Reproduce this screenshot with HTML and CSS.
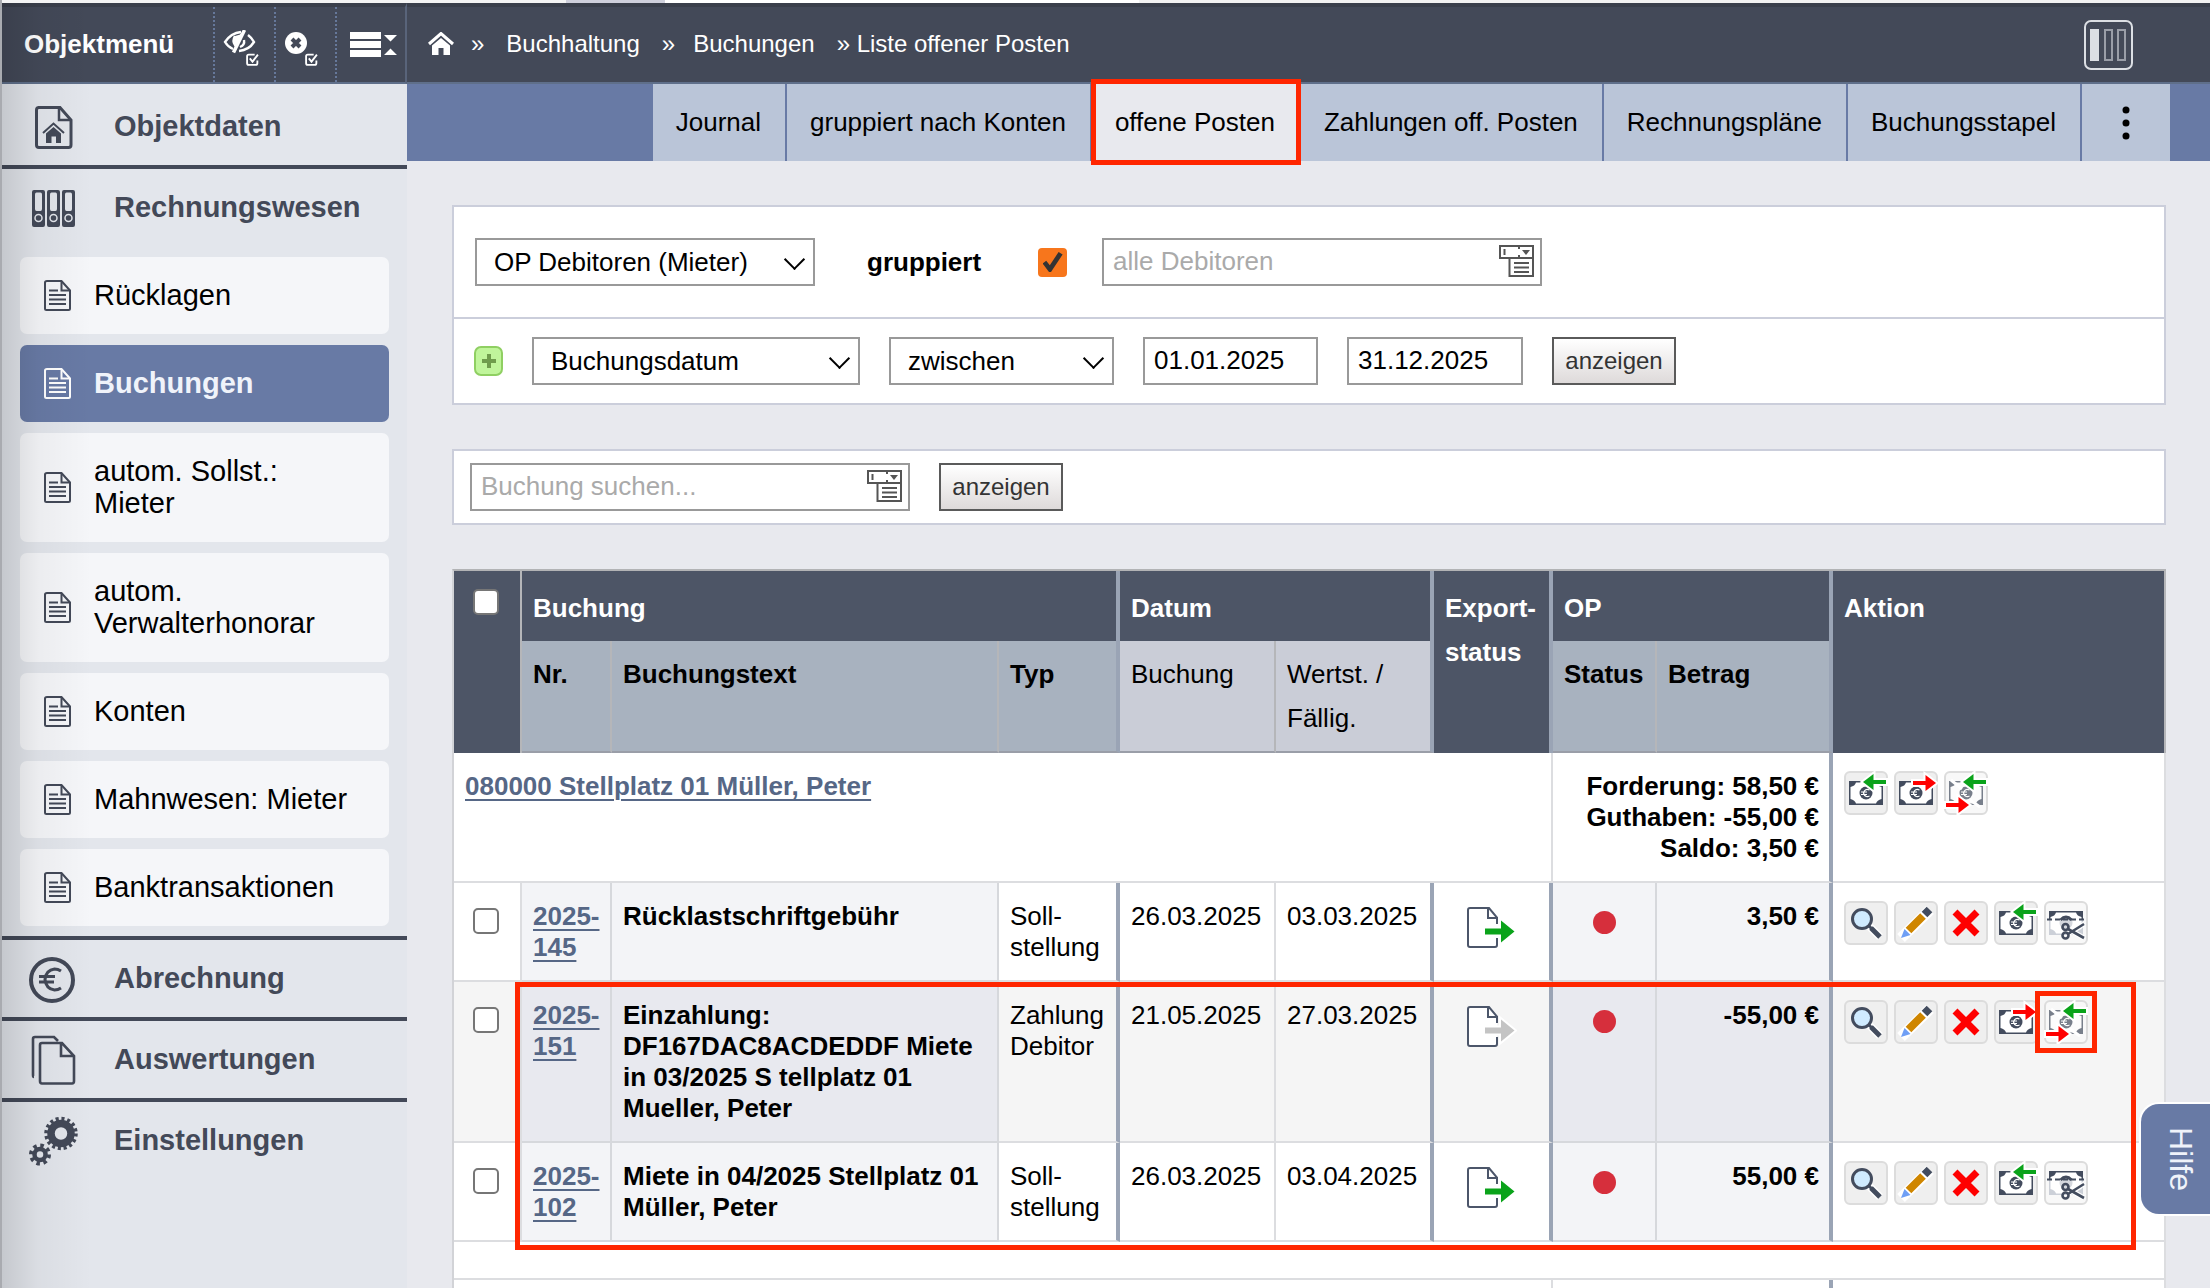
FILE: index.html
```html
<!DOCTYPE html>
<html lang="de">
<head>
<meta charset="utf-8">
<title>Liste offener Posten</title>
<link rel="stylesheet" href="styles.css">
</head>
<body>
<svg class="defs" width="0" height="0" aria-hidden="true">
  <symbol id="doc" viewBox="0 0 27 31"><g fill="none" stroke="currentColor" stroke-width="2"><path d="M3 1H17.500L26 10.500V28.500Q26 30 24.500 30H2.500Q1 30 1 28.500V2.500Q1 1 3 1z"/><path d="M17.500 1V10.500H26M5 10.500H14M5 15H22M5 19.500H22M5 24H22"/></g></symbol>
  <symbol id="check" viewBox="0 0 12 12"><path d="M8 1.500H2.500Q1 1.500 1 3V9.500Q1 11 2.500 11H9Q10.500 11 10.500 9.500V7M3.500 5L6 8L11 1.500" fill="none" stroke="#fff" stroke-width="1.700"/></symbol>
  <symbol id="lookup" viewBox="0 0 35 32"><g fill="none" stroke="#555" stroke-width="2"><path d="M1 1H34V13H1zM10.500 13H34V31H10.500zM5.500 4V10M20 1V4M20 10V13M15 18H30M15 22.500H30M15 27H30"/></g><path d="M23 5H31L27 10z" fill="#555"/></symbol>
  <symbol id="note" viewBox="0 0 44 44"><path d="M5 10H39V34H5z" fill="#434c5e"/><path d="M12 11.500H32Q33 15 37.500 16V28Q33 29 32 32.500H12Q11 29 6.500 28V16Q11 15 12 11.500z" fill="#fff"/><circle cx="22" cy="22" r="6.500" fill="#434c5e"/><path d="M25.500 19Q21 17 19.500 22Q21 27 25.500 25M17 21H23M17 23.500H23" fill="none" stroke="#fff" stroke-width="1.200"/></symbol>
  <symbol id="left" viewBox="0 0 44 44"><path d="M19 11L29.500 3V9H42V13H29.500V19z" fill="#0aa31a" stroke="#fff" stroke-width="4" paint-order="stroke"/></symbol>
  <symbol id="in" viewBox="0 0 44 44"><use href="#note"/><use href="#left"/></symbol>
  <symbol id="out" viewBox="0 0 48 44"><use href="#note" width="44" height="44"/><path d="M42 12L31.500 4V10H19V14H31.500V20z" fill="#f00" stroke="#fff" stroke-width="4" paint-order="stroke"/></symbol>
  <symbol id="both" viewBox="0 0 44 44"><use href="#note" opacity=".7"/><path d="M7 9L18 18M26 29L36 36" stroke="#fff" stroke-width="3"/><use href="#left"/><path d="M25 34L14.500 26V32H2V36H14.500V42z" fill="#f00" stroke="#fff" stroke-width="4" paint-order="stroke"/></symbol>
  <symbol id="zoomin" viewBox="0 0 44 44"><path d="M25 25L36 36" stroke="#fff" stroke-width="8"/><path d="M27 27L36 36" stroke="#434c5e" stroke-width="5"/><path d="M24 24L28 28" stroke="#434c5e" stroke-width="3"/><circle cx="18" cy="18" r="9.500" fill="#d0ebff" stroke="#434c5e" stroke-width="3"/></symbol>
  <symbol id="edit" viewBox="0 0 44 44"><path d="M7 37L36 9" stroke="#fff" stroke-width="11"/><path d="M14.500 29.500L29 15" stroke="#cf8600" stroke-width="8"/><path d="M30.500 13.500L35.500 8.500" stroke="#434c5e" stroke-width="8"/><path d="M7 37L10.500 28L16.500 34z" fill="#6f9ff5"/></symbol>
  <symbol id="del" viewBox="0 0 44 44"><path d="M11 11L33 33M33 11L11 33" stroke="#f00" stroke-width="7"/></symbol>
  <symbol id="cut" viewBox="0 0 44 44"><path d="M5 19V34H39V19z" fill="#ccd0d8"/><path d="M5 10H39V19H5z" fill="#434c5e"/><path d="M12 11.500H32Q33 15 37.500 16V28Q33 29 32 32.500H12Q11 29 6.500 28V16Q11 15 12 11.500z" fill="#fff"/><circle cx="22" cy="22" r="6.500" fill="#d5d8de"/><path d="M16.500 19Q22 13 27.500 19" fill="none" stroke="#434c5e" stroke-width="3"/><path d="M3 18.500H41" stroke="#434c5e" stroke-width="2" stroke-dasharray="5 3"/><g fill="none" stroke="#fff" stroke-width="5"><path d="M24 33L40 23M24 28L40 37"/></g><g fill="none" stroke="#434c5e" stroke-width="2.600"><circle cx="21.500" cy="26" r="3"/><circle cx="21.500" cy="34.500" r="3"/><path d="M24 33L40 23M24 28L40 37"/></g></symbol>
  <symbol id="export" viewBox="0 0 50 41"><path d="M28 1H3Q1 1 1 3V38Q1 40 3 40H28Q30 40 30 38V10L22 1z" fill="#fff" stroke="none"/><path d="M30 17V10.500L22 1H3Q1 1 1 3V38Q1 40 3 40H28Q30 40 30 38V31M21 1V11H30" fill="none" stroke="#4c566a" stroke-width="2"/><path d="M18 21.500H34V13.500L47.500 24.500L34 35.500V27.500H18z" fill="currentColor" stroke="#fff" stroke-width="4" paint-order="stroke"/></symbol>
</svg>
<div class="strip"></div>
<div class="app">
  <aside class="sidebar">
    <div class="side-head">
      <h1 class="side-title">Objektmenü</h1>
      <button class="head-btn" aria-label="Ausblenden"><svg width="36" height="36" viewBox="0 0 36 36"><g fill="none" stroke="#fff" stroke-width="2.400"><path d="M18 2Q8 3 2 12Q5 17 10 19"/><path d="M25 5Q29 8 31 12Q26 20 16 21"/><path d="M21 10Q22 15 17 17"/><path d="M12 6Q9 11 12 15L19 4" fill="#fff"/><path d="M21.500 0L10.500 22.500" stroke-width="3.500"/></g><use href="#check" x="23" y="23" width="13" height="13"/></svg></button>
      <button class="head-btn" aria-label="Schließen"><svg width="34" height="36" viewBox="0 0 34 36"><circle cx="12" cy="13" r="11" fill="#fff"/><path d="M8 9L16 17M16 9L8 17" stroke="#434958" stroke-width="4"/><use href="#check" x="21" y="23" width="13" height="13"/></svg></button>
      <button class="head-btn head-btn-wide" aria-label="Menü zusammenklappen"><svg width="48" height="26" viewBox="0 0 48 26"><path d="M0 0H31V7H0zM0 9H31V16H0zM0 18H31V25H0zM34 3H47L40.500 9.500zM34 23H47L40.500 16.500z" fill="#fff"/></svg></button>
    </div>
    <nav class="side-nav" aria-label="Objektmenü">
      <section class="group group-first"><a class="group-link" href="#"><svg width="50" height="50" viewBox="0 0 50 50"><g fill="none" stroke="currentColor"><path d="M10 5.500H32L43 18V43Q43 45.500 40.500 45.500H11Q8.500 45.500 8.500 43V8Q8.500 5.500 11 5.500z" stroke-width="3"/><path d="M31 5.500V18H43" stroke-width="2.500"/><path d="M15 31L25.500 21.500L36 31" stroke-width="2"/></g><path d="M18 31.500L25.500 25L33 31.500V41H28V34.500H23.500V41H18z" fill="currentColor"/></svg>Objektdaten</a></section>
      <section class="group"><a class="group-link" href="#"><svg width="50" height="50" viewBox="0 0 50 50"><path fill-rule="evenodd" fill="currentColor" d="M6 7h9q2 0 2 2v33q0 2-2 2H6q-2 0-2-2V9q0-2 2-2zM8.500 9.500q-1.500 0-1.500 2V26q0 2 1.500 2h4q1.500 0 1.500-2V11.500q0-2-1.500-2zM21 7h9q2 0 2 2v33q0 2-2 2H21q-2 0-2-2V9q0-2 2-2zM23.500 9.500q-1.500 0-1.500 2V26q0 2 1.500 2h4q1.500 0 1.500-2V11.500q0-2-1.500-2zM36 7h9q2 0 2 2v33q0 2-2 2H36q-2 0-2-2V9q0-2 2-2zM38.500 9.500q-1.500 0-1.500 2V26q0 2 1.500 2h4q1.500 0 1.500-2V11.500q0-2-1.500-2z"/><g fill="none" stroke="#e3e6ec" stroke-width="1.500"><circle cx="10.500" cy="35" r="3.500"/><circle cx="25.500" cy="35" r="3.500"/><circle cx="40.500" cy="35" r="3.500"/></g></svg>Rechnungswesen</a>
        <ul class="subnav">
          <li><a class="sub" href="#"><svg width="27" height="31"><use href="#doc"/></svg><span>Rücklagen</span></a></li>
          <li><a class="sub sub-active" href="#" aria-current="page"><svg width="27" height="31"><use href="#doc"/></svg><span>Buchungen</span></a></li>
          <li><a class="sub" href="#"><svg width="27" height="31"><use href="#doc"/></svg><span>autom. Sollst.:<br>Mieter</span></a></li>
          <li><a class="sub" href="#"><svg width="27" height="31"><use href="#doc"/></svg><span>autom.<br>Verwalterhonorar</span></a></li>
          <li><a class="sub" href="#"><svg width="27" height="31"><use href="#doc"/></svg><span>Konten</span></a></li>
          <li><a class="sub" href="#"><svg width="27" height="31"><use href="#doc"/></svg><span>Mahnwesen: Mieter</span></a></li>
          <li><a class="sub" href="#"><svg width="27" height="31"><use href="#doc"/></svg><span>Banktransaktionen</span></a></li>
        </ul>
      </section>
      <section class="group"><a class="group-link" href="#"><svg width="50" height="50" viewBox="0 0 50 50"><g fill="none" stroke="currentColor"><circle cx="24" cy="26" r="21" stroke-width="4"/><path d="M33 17Q30 15 26.500 15Q18 16 17 25.500Q18 35 26.500 36Q30 36 33 34M11 22.500H27M11 28H26" stroke-width="3"/></g></svg>Abrechnung</a></section>
      <section class="group"><a class="group-link" href="#"><svg width="50" height="50" viewBox="0 0 50 50"><g fill="none" stroke="currentColor" stroke-width="2.600"><path d="M6 42Q5 42 5 40V4Q5 2 7 2H26L30 6"/><path d="M14 8H34L46 21V46Q46 48.500 44 48.500H14Q12 48.500 12 46V10Q12 8 14 8zM33 8V21H46"/></g></svg>Auswertungen</a></section>
      <section class="group"><a class="group-link" href="#"><svg width="50" height="50" viewBox="0 0 50 50"><g fill="none" stroke="currentColor"><circle cx="33" cy="17.500" r="10" stroke-width="7.500"/><circle cx="33" cy="17.500" r="14.500" stroke-width="4.500" stroke-dasharray="3 2.694"/><circle cx="12" cy="38.500" r="5.500" stroke-width="4.500"/><circle cx="12" cy="38.500" r="9" stroke-width="4" stroke-dasharray="3.500 3.569"/></g></svg>Einstellungen</a></section>
    </nav>
  </aside>

  <div class="page">
    <header class="topbar">
      <nav class="crumbs" aria-label="Pfad">
        <a href="#" aria-label="Start"><svg width="26" height="24" viewBox="0 0 26 24"><path d="M1 12L13 1.500L25 12" fill="none" stroke="#fff" stroke-width="3"/><path d="M4 13.500L13 6L22 13.500V23H15.500V16H10.500V23H4z" fill="#fff"/></svg></a>
        <span class="sep sep-home">»</span><a href="#">Buchhaltung</a><span class="sep">»</span><a href="#">Buchungen</a><span class="current">» Liste offener Posten</span>
      </nav>
      <button class="cols-btn" aria-label="Spaltenansicht"><svg width="49" height="50" viewBox="0 0 49 50"><rect x="1" y="1" width="47" height="48" rx="6" fill="none" stroke="#dcdfe4" stroke-width="2"/><rect x="6" y="9" width="9" height="32" fill="#dcdfe4"/><path d="M21 10H28V40H21zM34 10H41V40H34z" fill="none" stroke="#9a9ea8" stroke-width="2"/></svg></button>
    </header>
    <nav class="tabs" aria-label="Ansichten">
      <a class="tab" href="#">Journal</a><a class="tab" href="#">gruppiert nach Konten</a><a class="tab tab-active" href="#" aria-current="page">offene Posten</a><a class="tab" href="#">Zahlungen off. Posten</a><a class="tab" href="#">Rechnungspläne</a><a class="tab" href="#">Buchungsstapel</a><button class="tab tab-more" aria-label="Weitere"><svg width="8" height="34" viewBox="0 0 8 34"><circle cx="4" cy="4" r="3.500"/><circle cx="4" cy="17" r="3.500"/><circle cx="4" cy="30" r="3.500"/></svg></button>
    </nav>

    <main class="content">
      <form class="panel">
        <div class="row row-tall">
          <span class="select select-type"><select aria-label="Postenart"><option>OP Debitoren (Mieter)</option></select></span>
          <label class="group-label" for="grouped">gruppiert</label>
          <input class="tick-orange" type="checkbox" id="grouped" checked>
          <span class="lookup"><input type="text" placeholder="alle Debitoren" aria-label="Debitoren"><svg width="35" height="32"><use href="#lookup"/></svg></span>
        </div>
        <div class="row">
          <button class="add" type="button" aria-label="Filter hinzufügen"><svg width="14" height="14" viewBox="0 0 14 14"><path d="M5 0H9V5H14V9H9V14H5V9H0V5H5z" fill="#6f9c4c"/></svg></button>
          <span class="select select-field"><select aria-label="Feld"><option>Buchungsdatum</option></select></span>
          <span class="select select-op"><select aria-label="Vergleich"><option>zwischen</option></select></span>
          <input class="date" type="text" value="01.01.2025" aria-label="von">
          <input class="date" type="text" value="31.12.2025" aria-label="bis">
          <button class="show" type="button">anzeigen</button>
        </div>
      </form>

      <form class="panel">
        <div class="row row-search">
          <span class="lookup"><input type="text" placeholder="Buchung suchen..." aria-label="Buchung suchen"><svg width="35" height="32"><use href="#lookup"/></svg></span>
          <button class="show" type="button">anzeigen</button>
        </div>
      </form>

      <table class="list">
        <colgroup><col class="w-tick"><col class="w-nr"><col class="w-text"><col class="w-typ"><col class="w-date"><col class="w-value"><col class="w-export"><col class="w-status"><col class="w-sum"><col></colgroup>
        <thead>
          <tr class="top">
            <th rowspan="2" class="tick"><input type="checkbox" aria-label="Alle auswählen"></th>
            <th colspan="3" class="end">Buchung</th><th colspan="2" class="end">Datum</th><th rowspan="2" class="end">Export-<br>status</th><th colspan="2" class="end">OP</th><th rowspan="2">Aktion</th>
          </tr>
          <tr class="cols">
            <th>Nr.</th><th>Buchungstext</th><th class="end">Typ</th><th class="light">Buchung</th><th class="light end">Wertst. /<br>Fällig.</th><th>Status</th><th class="end">Betrag</th>
          </tr>
        </thead>
        <tbody>
          <tr>
            <td colspan="7" class="bold"><a href="#">080000 Stellplatz 01 Müller, Peter</a></td>
            <td colspan="2" class="bold num end">Forderung: 58,50 €<br>Guthaben: -55,00 €<br>Saldo: 3,50 €</td>
            <td><div class="actions"><button aria-label="Einzahlung"><svg width="44" height="44"><use href="#in"/></svg></button><button aria-label="Auszahlung"><svg width="48" height="44"><use href="#out"/></svg></button><button class="soft" aria-label="Verrechnen"><svg width="44" height="44"><use href="#both"/></svg></button></div></td>
          </tr>
          <tr>
            <td class="tick"><input type="checkbox" aria-label="2025-145"></td>
            <td class="tint bold"><a href="#">2025-<br>145</a></td><td class="tint bold">Rücklastschriftgebühr</td><td class="end">Soll-<br>stellung</td><td>26.03.2025</td><td class="end">03.03.2025</td>
            <td class="export end"><svg width="50" height="41"><use href="#export"/></svg></td><td class="tint status"><span class="dot"></span></td><td class="tint bold num end">3,50 €</td>
            <td><div class="actions"><button aria-label="Ansehen"><svg width="44" height="44"><use href="#zoomin"/></svg></button><button aria-label="Bearbeiten"><svg width="44" height="44"><use href="#edit"/></svg></button><button aria-label="Löschen"><svg width="44" height="44"><use href="#del"/></svg></button><button aria-label="Einzahlung"><svg width="44" height="44"><use href="#in"/></svg></button><button class="soft" aria-label="Ausbuchen"><svg width="44" height="44"><use href="#cut"/></svg></button></div></td>
          </tr>
        </tbody>
        <tbody class="marked">
          <tr class="alt">
            <td class="tick"><input type="checkbox" aria-label="2025-151"></td>
            <td class="tint bold"><a href="#">2025-<br>151</a></td><td class="tint bold">Einzahlung: DF167DAC8ACDEDDF Miete in 03/2025 S tellplatz 01 Mueller, Peter</td><td class="end">Zahlung<br>Debitor</td><td>21.05.2025</td><td class="end">27.03.2025</td>
            <td class="export export-off end"><svg width="50" height="41"><use href="#export"/></svg></td><td class="tint status"><span class="dot"></span></td><td class="tint bold num end">-55,00 €</td>
            <td><div class="actions"><button aria-label="Ansehen"><svg width="44" height="44"><use href="#zoomin"/></svg></button><button aria-label="Bearbeiten"><svg width="44" height="44"><use href="#edit"/></svg></button><button aria-label="Löschen"><svg width="44" height="44"><use href="#del"/></svg></button><button aria-label="Auszahlung"><svg width="48" height="44"><use href="#out"/></svg></button><button class="soft flagged" aria-label="Verrechnen"><svg width="44" height="44"><use href="#both"/></svg></button></div></td>
          </tr>
          <tr>
            <td class="tick"><input type="checkbox" aria-label="2025-102"></td>
            <td class="tint bold"><a href="#">2025-<br>102</a></td><td class="tint bold">Miete in 04/2025 Stellplatz 01 Müller, Peter</td><td class="end">Soll-<br>stellung</td><td>26.03.2025</td><td class="end">03.04.2025</td>
            <td class="export end"><svg width="50" height="41"><use href="#export"/></svg></td><td class="tint status"><span class="dot"></span></td><td class="tint bold num end">55,00 €</td>
            <td><div class="actions"><button aria-label="Ansehen"><svg width="44" height="44"><use href="#zoomin"/></svg></button><button aria-label="Bearbeiten"><svg width="44" height="44"><use href="#edit"/></svg></button><button aria-label="Löschen"><svg width="44" height="44"><use href="#del"/></svg></button><button aria-label="Einzahlung"><svg width="44" height="44"><use href="#in"/></svg></button><button class="soft" aria-label="Ausbuchen"><svg width="44" height="44"><use href="#cut"/></svg></button></div></td>
          </tr>
        </tbody>
        <tbody>
          <tr class="spacer"><td colspan="10"></td></tr>
          <tr><td colspan="7"></td><td colspan="2" class="end"></td><td></td></tr>
        </tbody>
      </table>
    </main>
  </div>
</div>
<button class="help">Hilfe</button>
</body>
</html>
```
FILE: styles.css
```css
* { box-sizing: border-box; }

body {
  margin: 0;
  height: 100vh;
  overflow: hidden;
  display: flex;
  flex-direction: column;
  border-left: 2px solid #a9abb0;
  background: #e8e9ee;
  color: #000;
  font-family: "Liberation Sans", Arial, sans-serif;
  font-size: 26px;
}

button, input, select { font: inherit; color: inherit; }
button { padding: 0; border: 0; background: none; cursor: pointer; }
a { color: inherit; text-decoration: none; }
svg { display: block; flex: none; }
.defs { position: absolute; }

/* browser tab edge above the page */
.strip {
  flex: none;
  height: 3px;
  background: linear-gradient(90deg, #f4f4f4 564px, #cfd0dc 564px, #cfd0dc 663px, #fff 663px, #fff 1137px, #f2f2f2 1137px);
}

.app {
  flex: 1;
  min-height: 0;
  display: grid;
  grid-template-columns: 405px minmax(0, 1fr);
}

/* sidebar */
.sidebar { position: relative; background: #e3e6ec; overflow: hidden; }
.sidebar::after {
  content: "";
  position: absolute;
  inset: 0 auto 0 0;
  width: 90px;
  background: linear-gradient(90deg, rgba(0, 0, 0, .13), rgba(0, 0, 0, .04) 40%, rgba(0, 0, 0, 0));
  pointer-events: none;
}
.side-head, .topbar {
  height: 81px;
  display: flex;
  background: #434958;
  border-top: 4px solid #3a3f4b;
  border-bottom: 2px solid #5f6f8a;
  color: #fff;
}
.side-head { border-right: 2px solid #59647a; }
.side-title {
  flex: 1;
  margin: 0;
  padding: 0 0 2px 22px;
  align-self: center;
  font-size: 26px;
  line-height: 32px;
}
.head-btn {
  width: 61px;
  padding: 6px 0 0 8px;
  border-left: 2px dotted #66789a;
  display: flex;
  align-items: center;
}
.head-btn-wide { width: 70px; padding: 0 0 0 13px; }

.group { border-bottom: 4px solid #434958; color: #434958; }
.group:last-child { border-bottom: 0; }
.group-first { padding-top: 4px; }
.group-link {
  height: 77px;
  padding-left: 26px;
  display: flex;
  align-items: center;
  gap: 36px;
  font-size: 29px;
  font-weight: bold;
}
.subnav {
  margin: 0;
  padding: 11px 18px 10px;
  list-style: none;
  display: flex;
  flex-direction: column;
  gap: 11px;
}
.sub {
  padding: 22px 24px 23px;
  display: flex;
  align-items: center;
  gap: 23px;
  border-radius: 7px;
  background: #f5f6f9;
  font-size: 29px;
  line-height: 32px;
}
.sub span { color: #000; }
.sub-active { background: #687aa5; color: #fff; font-weight: bold; }
.sub-active span { color: #f0f3fa; }

/* top bar */
.page { display: flex; flex-direction: column; overflow: hidden; }
.topbar { flex: none; justify-content: space-between; align-items: center; padding: 0 77px 0 21px; }
.crumbs { display: flex; align-items: center; font-size: 24px; padding-bottom: 2px; }
.sep { padding: 0 18px 0 22px; }
.sep-home { padding: 0 22px 0 17px; }
.current { padding-left: 22px; }

.tabs {
  flex: none;
  height: 77px;
  padding-right: 40px;
  display: flex;
  justify-content: flex-end;
  background: #687aa5;
}
.tab {
  padding: 0 24px 0 23px;
  display: flex;
  align-items: center;
  background: #bac5d8;
  border-right: 2px solid #687aa5;
}
.tab-more { width: 88px; padding: 0; border-right: 0; justify-content: center; }
.tab-active { position: relative; background: #e8e9ee; }
.tab-active::after {
  content: "";
  position: absolute;
  inset: -5px -2px -4px -1px;
  border: 5px solid #ff2600;
}

.content {
  padding: 44px 44px 0 45px;
  display: flex;
  flex-direction: column;
  gap: 44px;
}

/* filters */
.panel { margin: 0; background: #fff; border: 2px solid #cbcedb; }
.row { padding: 18px 20px; display: flex; align-items: center; gap: 29px; }
.row-tall { padding: 31px 21px; gap: 0; border-bottom: 2px solid #cbcedb; }
.row-search { padding: 12px 16px; }

.select { position: relative; display: flex; }
.select::after {
  content: "";
  position: absolute;
  right: 13px;
  top: 14px;
  width: 13px;
  height: 13px;
  border: solid #000;
  border-width: 0 2px 2px 0;
  transform: rotate(45deg);
  pointer-events: none;
}
.select select, .lookup input, .date {
  width: 100%;
  height: 48px;
  margin: 0;
  border: 2px solid #999;
  border-radius: 0;
  background: #fff;
  appearance: none;
}
.select select { padding: 0 17px; }
.select-type { width: 340px; }
.select-field { width: 328px; }
.select-op { width: 225px; }
.date { width: 175px; padding: 0 9px 2px; }
.date:last-of-type { width: 176px; }
.lookup { position: relative; width: 440px; display: flex; }
.lookup input { padding: 0 60px 2px 9px; }
.lookup input::placeholder { color: #aaa; opacity: 1; }
.lookup svg { position: absolute; right: 8px; top: 7px; }
.group-label { margin: 0 57px 0 52px; font-weight: bold; }
.tick-orange {
  width: 29px;
  height: 29px;
  margin: 0 35px 0 0;
  appearance: none;
  display: grid;
  place-items: center;
  border-radius: 4px;
  background: #f7761c;
}
.tick-orange::before {
  content: "";
  width: 20px;
  height: 20px;
  background: #333;
  clip-path: polygon(0 58%, 18% 44%, 36% 66%, 80% 0, 100% 12%, 42% 100%, 32% 100%);
}
.show {
  width: 124px;
  height: 48px;
  border: 2px solid #5a5a5a;
  background: linear-gradient(#fff, #dedada);
  color: #333;
  font-size: 24px;
}
.add {
  width: 29px;
  height: 30px;
  display: grid;
  place-items: center;
  border: 2px solid #8fcf62;
  border-radius: 7px;
  background: #c0f59b;
}

/* bookings */
.list {
  width: 100%;
  table-layout: fixed;
  border-spacing: 0;
  border-left: 2px solid #d2d3d7;
  border-top: 2px solid #b2b3b5;
  background: #fff;
  line-height: 31px;
}
.w-tick { width: 68px; }
.w-nr { width: 90px; }
.w-text { width: 387px; }
.w-typ { width: 121px; }
.w-date { width: 156px; }
.w-value { width: 158px; }
.w-export { width: 119px; }
.w-status { width: 104px; }
.w-sum { width: 176px; }

.list th {
  padding: 11px 8px 11px 11px;
  border-right: 2px solid #b5b6b9;
  text-align: left;
  vertical-align: top;
  line-height: 44px;
}
.list .top th { padding-top: 15px; background: #4d5566; color: #fff; }
.list .cols th { background: #a8b2bf; border-bottom: 2px solid #9a9ea8; }
.list .cols .light { background: #cacdd7; font-weight: normal; }
.list td {
  padding: 18px 8px 17px 11px;
  border-right: 2px solid #dcdde0;
  border-bottom: 2px solid #dcdde0;
  vertical-align: top;
}
.list .end { border-right: 4px solid #9aa4b5; }
.list td.bold { font-weight: bold; }
.list td.num { padding-right: 10px; text-align: right; }
.list a { color: #566786; text-decoration: underline; text-decoration-thickness: 2px; text-underline-offset: 4px; }
.list .tint { background: #f3f4f7; border-color: #d6d8dc; }
.list .tint.end { border-right-color: #9aa4b5; }
.alt { background: #f5f5f5; }
.list .alt .tint { background: #e8e9ef; }

.list .tick { padding: 25px 0 0 19px; }
.list .top .tick { padding-top: 18px; }
.tick input {
  display: block;
  width: 26px;
  height: 26px;
  margin: 0;
  appearance: none;
  border: 2px solid #767676;
  border-radius: 5px;
  background: #fff;
}
.list .export { padding: 24px 0 0 33px; color: #0aa31a; }
.list .export-off { color: #c4c4c4; }
.list .status { padding: 28px 0 0; }
.dot { display: block; width: 23px; height: 23px; margin: 0 auto; border-radius: 50%; background: #d62f3c; }

.actions { height: 44px; display: flex; gap: 6px; }
.actions button {
  width: 44px;
  height: 44px;
  border: 2px solid #dcdcdc;
  border-radius: 6px;
  background: #efefef;
}
.actions svg { margin: -2px; overflow: visible; }
.actions .soft { background: #f8f8f8; }
.actions .flagged { position: relative; }
.flagged::after { content: ""; position: absolute; inset: -11px; border: 5px solid #ff2600; }

.marked { position: relative; }
.marked::after {
  content: "";
  position: absolute;
  inset: 0 30px -8px 61px;
  border: 5px solid #ff2600;
  pointer-events: none;
}
.list .spacer td { height: 38px; padding: 0; }

.help {
  position: fixed;
  right: 0;
  top: 1102px;
  width: 71px;
  height: 114px;
  padding-left: 10px;
  border: 2px solid #fff;
  border-right: 0;
  border-radius: 20px 0 0 20px;
  background: #687aa5;
  color: #f0f3fa;
  font-size: 32px;
  writing-mode: vertical-rl;
}
```
